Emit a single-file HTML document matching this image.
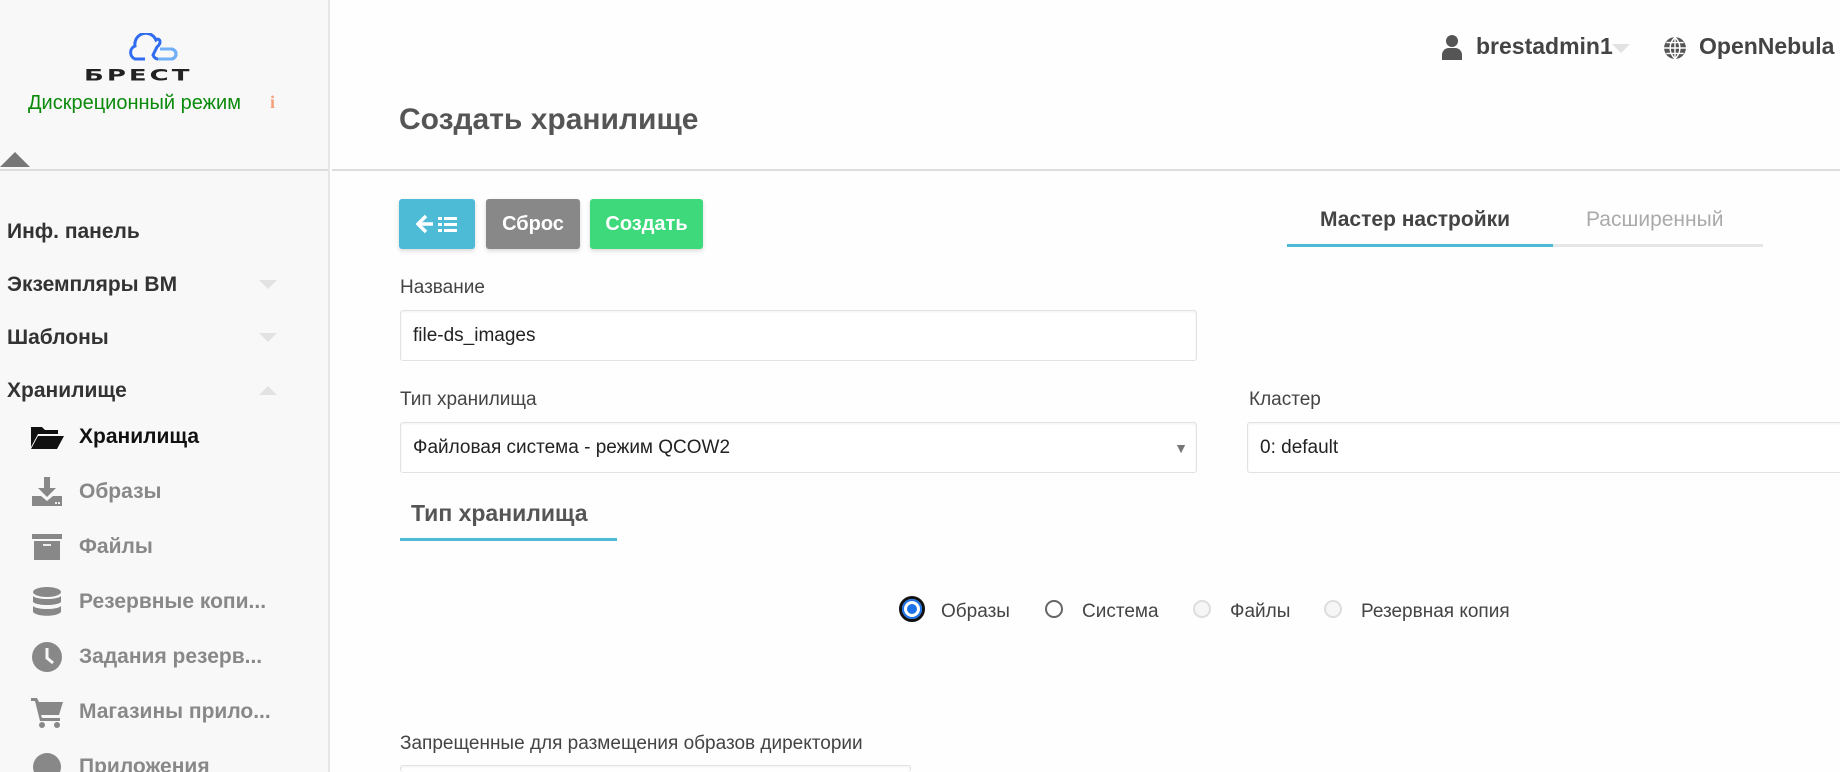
<!DOCTYPE html>
<html><head><meta charset="utf-8"><style>
*{box-sizing:border-box;margin:0;padding:0}
html{width:1840px;height:772px;overflow:hidden}
body{width:1840px;height:772px;overflow:hidden;background:#fefefe;font-family:"Liberation Sans","Noto Sans CJK SC",sans-serif;position:relative;color:#333}
.a{position:absolute;white-space:nowrap}
#side{position:absolute;left:0;top:0;width:330px;height:772px;background:#f8f8f8;border-right:2px solid #e6e6e6;overflow:hidden}
.m{position:absolute;left:7px;font-weight:bold;font-size:21px;color:#333;transform:translateY(-50%)}
.s{position:absolute;left:79px;font-weight:bold;font-size:21px;color:#888;transform:translateY(-50%)}
.chev{position:absolute;left:259px;width:0;height:0;border-left:9px solid transparent;border-right:9px solid transparent}
.ic{position:absolute;left:30px;width:34px;height:34px;transform:translateY(-50%)}
.lbl{position:absolute;font-size:19px;color:#444;transform:translateY(-50%)}
.inp{position:absolute;background:#fff;border:1px solid #e2e2e2;border-radius:3px;box-shadow:inset 0 1px 2px rgba(0,0,0,.06);font-size:19px;color:#222;padding-left:12px;display:flex;align-items:center}
.btn{position:absolute;top:199px;height:50px;border-radius:3px;color:#fff;font-weight:bold;font-size:20px;display:flex;align-items:center;justify-content:center;box-shadow:0 2px 4px rgba(0,0,0,.15)}
.rd{position:absolute;top:600px;width:18px;height:18px;border-radius:50%;border:2px solid #666;background:#fff}
.rt{position:absolute;top:612px;font-size:19px;color:#444;transform:translateY(-50%)}
</style></head><body>
<div id="side">
<svg class="a" style="left:126px;top:33px" width="54" height="30" viewBox="0 0 52 30"><path d="M18 26 H8 A7 7 0 0 1 8 13 A11 11 0 0 1 29 7 C33 4 35 10 30 14 L26 22 A6 6 0 0 0 31 26 H44 A5 5 0 0 0 44 16 H33" fill="none" stroke="#2f6cf0" stroke-width="3"/><path d="M31 26 H44 A5 5 0 0 0 44 16 H33" fill="none" stroke="#6fb0f7" stroke-width="3"/></svg>
<div class="a" style="left:84px;top:66px;font-size:26px;letter-spacing:3px;color:#222;font-weight:bold;transform:scaleY(.62);transform-origin:left top;font-family:'DejaVu Sans',sans-serif">БРЕСТ</div>
<div class="a" style="left:28px;top:92px;font-size:20px;color:#0a8a0a">Дискреционный режим</div>
<div class="a" style="left:270px;top:92px;font-size:18px;color:#f5a07a;font-weight:bold;font-family:'Liberation Serif',serif">i</div>
<div class="a" style="left:0;top:152px;width:0;height:0;border-left:15px solid transparent;border-right:15px solid transparent;border-bottom:15px solid #777"></div>
<div class="a" style="left:0;top:169px;width:330px;height:2px;background:#ddd"></div>
<div class="m" style="top:232px">Инф. панель</div>
<div class="m" style="top:285px">Экземпляры ВМ</div><div class="chev" style="top:280px;border-top:9px solid #e2e2e2"></div>
<div class="m" style="top:338px">Шаблоны</div><div class="chev" style="top:333px;border-top:9px solid #e2e2e2"></div>
<div class="m" style="top:391px">Хранилище</div><div class="chev" style="top:386px;border-bottom:9px solid #e2e2e2"></div>
<svg class="ic" style="top:437px" viewBox="0 0 34 34"><path d="M1 7h11l3 3h13v4H8L1 27z M8 16h26l-7 13H1z" fill="#111"/></svg>
<div class="s" style="top:437px;color:#111">Хранилища</div>
<svg class="ic" style="top:492px" viewBox="0 0 34 34"><path d="M14 2h6v11h6l-9 9-9-9h6z M2 21h9l6 5 6-5h9v10H2z" fill="#888"/><rect x="25" y="27" width="2" height="2" fill="#eee"/><rect x="28" y="27" width="2" height="2" fill="#eee"/></svg>
<div class="s" style="top:492px">Образы</div>
<svg class="ic" style="top:547px" viewBox="0 0 34 34"><rect x="2" y="4" width="30" height="5" fill="#888"/><rect x="4" y="11" width="26" height="19" fill="#888"/><rect x="13" y="14" width="8" height="2" fill="#eee"/></svg>
<div class="s" style="top:547px">Файлы</div>
<svg class="ic" style="top:602px" viewBox="0 0 34 34"><ellipse cx="17" cy="7" rx="14" ry="5" fill="#888"/><path d="M3 11c4 4 24 4 28 0v6c-4 4-24 4-28 0z M3 21c4 4 24 4 28 0v6c-4 5-24 5-28 0z" fill="#888"/></svg>
<div class="s" style="top:602px">Резервные копи...</div>
<svg class="ic" style="top:657px" viewBox="0 0 34 34"><circle cx="17" cy="17" r="15" fill="#888"/><path d="M17 8v10l6 5" stroke="#f8f8f8" stroke-width="3" fill="none"/></svg>
<div class="s" style="top:657px">Задания резерв...</div>
<svg class="ic" style="top:712px" viewBox="0 0 34 34"><path d="M1 3h6l2 4h24l-4 13H11l1 3h18v3H10L5 6H1z" fill="#888"/><circle cx="12" cy="30" r="3" fill="#888"/><circle cx="27" cy="30" r="3" fill="#888"/></svg>
<div class="s" style="top:712px">Магазины прило...</div>
<svg class="ic" style="top:767px" viewBox="0 0 34 34"><circle cx="17" cy="17" r="14" fill="#888"/></svg>
<div class="s" style="top:767px">Приложения</div>
</div>
<div class="a" style="left:332px;top:169px;width:1508px;height:2px;background:#ddd"></div>
<svg class="a" style="left:1442px;top:34px" width="20" height="26" viewBox="0 0 20 26"><circle cx="10" cy="7" r="6" fill="#555"/><path d="M0 26v-5c0-4 3-7 7-7h6c4 0 7 3 7 7v5z" fill="#555"/></svg>
<div class="a" style="left:1476px;top:33px;font-size:23px;font-weight:bold;color:#444">brestadmin1</div>
<div class="a" style="left:1612px;top:44px;border-left:9px solid transparent;border-right:9px solid transparent;border-top:9px solid #e2e2e2"></div>
<svg class="a" style="left:1663px;top:36px" width="24" height="24" viewBox="0 0 22 22"><circle cx="11" cy="11" r="10" fill="#555"/><path d="M11 1v20M1 11h20M3 6h16M3 16h16M11 1c-6 6-6 14 0 20M11 1c6 6 6 14 0 20" stroke="#fff" stroke-width="1.3" fill="none"/></svg>
<div class="a" style="left:1699px;top:33px;font-size:23px;font-weight:bold;color:#444">OpenNebula</div>
<div class="a" style="left:399px;top:103px;font-size:30px;font-weight:bold;color:#555">Создать хранилище</div>
<div class="btn" style="left:399px;width:76px;background:#4ebbd6"><svg width="46" height="22" viewBox="0 0 46 22"><path d="M12 3l-8 8 8 8M4 11h15" stroke="#fff" stroke-width="3.5" fill="none"/><g fill="#fff"><rect x="24" y="4" width="4" height="3"/><rect x="30" y="4" width="13" height="3"/><rect x="24" y="10" width="4" height="3"/><rect x="30" y="10" width="13" height="3"/><rect x="24" y="16" width="4" height="3"/><rect x="30" y="16" width="13" height="3"/></g></svg></div>
<div class="btn" style="left:486px;width:94px;background:#888">Сброс</div>
<div class="btn" style="left:590px;width:113px;background:#3dd97a">Создать</div>
<div class="a" style="left:1320px;top:208px;font-size:21px;font-weight:bold;color:#444">Мастер настройки</div>
<div class="a" style="left:1586px;top:208px;font-size:21px;color:#aaa">Расширенный</div>
<div class="a" style="left:1287px;top:244px;width:476px;height:3px;background:#e6e6e6"></div>
<div class="a" style="left:1287px;top:244px;width:266px;height:3px;background:#4ebbd6"></div>
<div class="lbl" style="left:400px;top:288px">Название</div>
<div class="inp" style="left:400px;top:310px;width:797px;height:51px">file-ds_images</div>
<div class="lbl" style="left:400px;top:400px">Тип хранилища</div>
<div class="inp" style="left:400px;top:422px;width:797px;height:51px">Файловая система - режим QCOW2<span style="position:absolute;right:8px;color:#777;font-size:14px">▼</span></div>
<div class="lbl" style="left:1249px;top:400px">Кластер</div>
<div class="inp" style="left:1247px;top:422px;width:620px;height:51px">0: default</div>
<div class="a" style="left:411px;top:500px;font-size:23px;font-weight:bold;color:#555">Тип хранилища</div>
<div class="a" style="left:400px;top:538px;width:217px;height:3px;background:#4ebbd6"></div>
<div class="rd" style="left:899px;top:596px;width:26px;height:26px;border:3px solid #111;background:#fff"><div style="position:absolute;left:2px;top:2px;width:16px;height:16px;border-radius:50%;background:#1a73e8;border:3px solid #fff;box-shadow:0 0 0 2px #1a73e8"></div></div>
<div class="rt" style="left:941px">Образы</div>
<div class="rd" style="left:1045px"></div>
<div class="rt" style="left:1082px">Система</div>
<div class="rd" style="left:1193px;border-color:#ddd;background:#f6f6f6"></div>
<div class="rt" style="left:1230px">Файлы</div>
<div class="rd" style="left:1324px;border-color:#ddd;background:#f6f6f6"></div>
<div class="rt" style="left:1361px">Резервная копия</div>
<div class="lbl" style="left:400px;top:744px">Запрещенные для размещения образов директории</div>
<div class="inp" style="left:400px;top:765px;width:511px;height:7px;border-bottom:none"></div>
</body></html>
